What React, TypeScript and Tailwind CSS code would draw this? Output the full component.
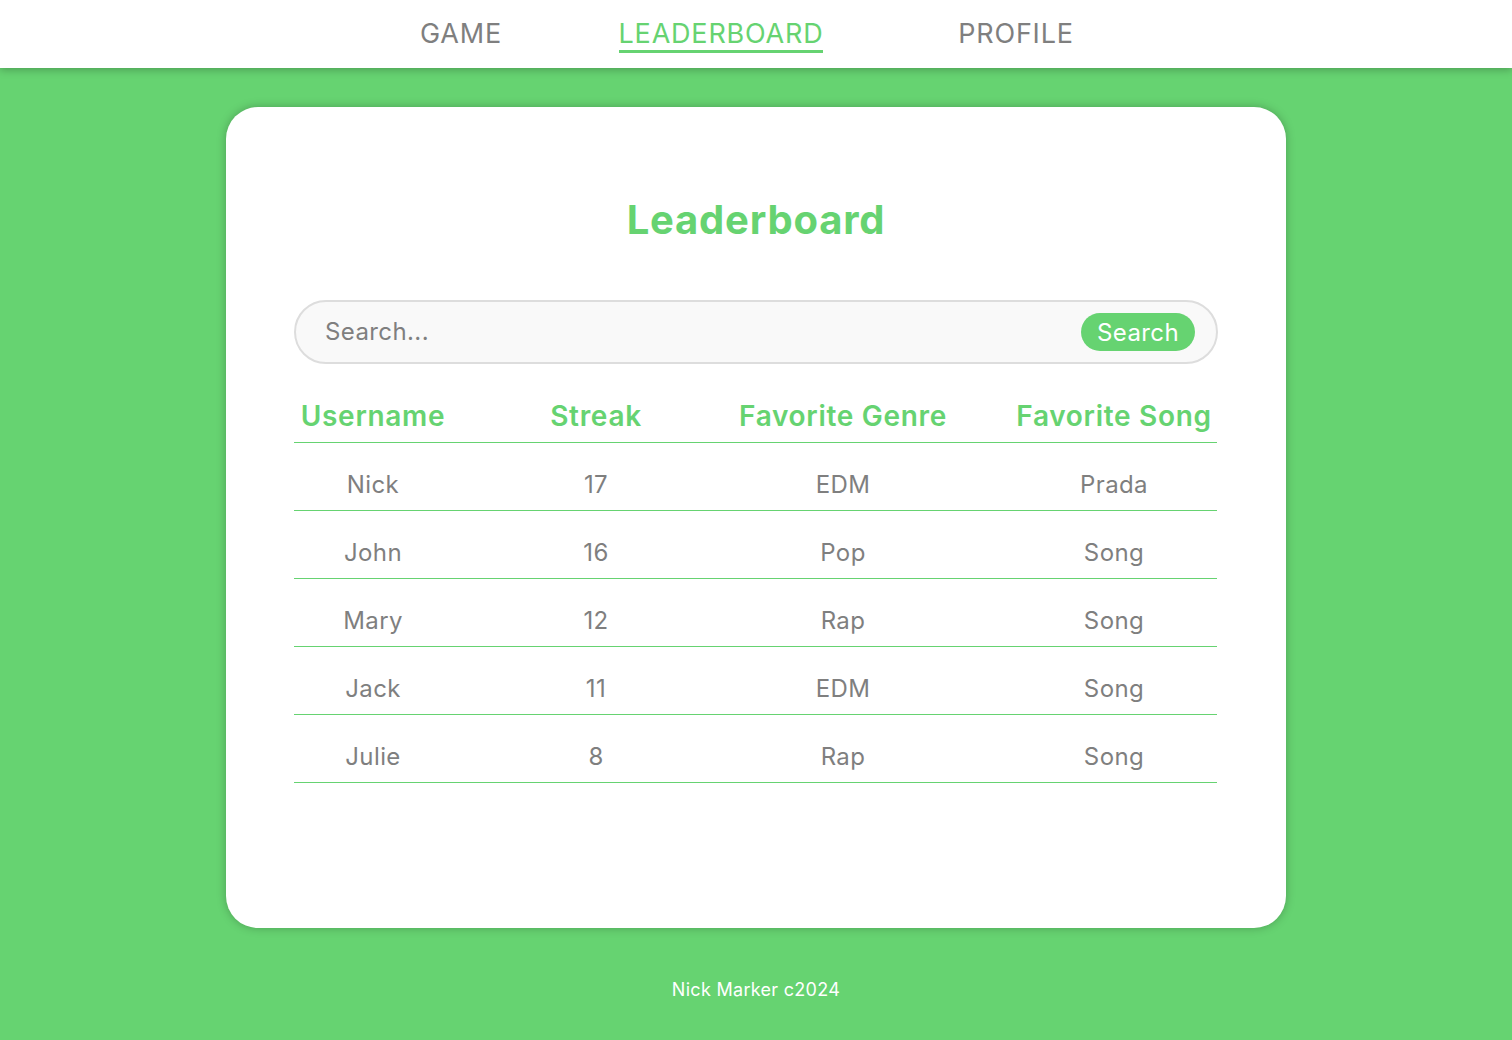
const rows = [
  { name: "Nick", streak: 17, genre: "EDM", song: "Prada" },
  { name: "John", streak: 16, genre: "Pop", song: "Song" },
  { name: "Mary", streak: 12, genre: "Rap", song: "Song" },
  { name: "Jack", streak: 11, genre: "EDM", song: "Song" },
  { name: "Julie", streak: 8, genre: "Rap", song: "Song" },
];

const font = { fontFamily: "Inter, 'Open Sans', sans-serif" };

const th =
  "flex justify-center whitespace-nowrap border-b border-[#66d371] pb-[9px] text-[28px] font-semibold leading-[34px] tracking-[0.7px] text-[#66d371]";
const td =
  "flex justify-center whitespace-nowrap border-b border-[#66d371] pb-[10px] pt-[27px] text-[24px] leading-[30px] tracking-[0.4px] text-[#7f7f7f]";

export default function App() {
  return (
    <div className="min-h-screen bg-[#66d371]" style={font}>
      <header className="relative z-10 flex h-[68px] items-center justify-center bg-white shadow-[0_2px_8px_rgba(0,0,0,0.25)]">
        <nav className="flex">
          <a className="w-[240px] text-center text-[27px] leading-[32px] tracking-[0.8px] text-[#7f7f7f]">
            GAME
          </a>
          <a className="w-[280px] text-center text-[27px] leading-[32px] tracking-[0.8px] text-[#66d371]">
            <span className="border-b-[3px] border-[#66d371] pb-0">LEADERBOARD</span>
          </a>
          <a className="w-[310px] text-center text-[27px] leading-[32px] tracking-[0.8px] text-[#7f7f7f]">
            PROFILE
          </a>
        </nav>
      </header>

      <main className="mx-auto mt-[39px] h-[821px] w-[1060px] rounded-[32px] bg-white px-[68px] pt-[89px] shadow-[0_0_10px_rgba(0,0,0,0.25)]">
        <h1 className="text-center text-[40px] font-bold leading-[48px] tracking-[0.8px] text-[#66d371]">
          Leaderboard
        </h1>

        <div className="mt-[56px] flex h-[64px] items-center rounded-full border-2 border-[#dddddd] bg-[#f9f9f9] pl-[29px] pr-[21px]">
          <input
            className="flex-1 bg-transparent text-[24px] leading-[30px] tracking-[0.4px] text-[#7f7f7f] outline-none placeholder:text-[#7f7f7f]"
            placeholder="Search..."
          />
          <button className="h-[38px] rounded-full bg-[#66d371] px-[16px] text-[24px] leading-[40px] tracking-[0.4px] text-white">
            Search
          </button>
        </div>

        <div className="mt-[35px] grid grid-cols-[158px_288px_206px_271px]">
          <div className={th}>Username</div>
          <div className={th}>Streak</div>
          <div className={th}>Favorite Genre</div>
          <div className={`${th} pl-[65px]`}>Favorite Song</div>

          {rows.map((r) => (
            <div key={r.name} className="contents">
              <div className={td}>{r.name}</div>
              <div className={td}>{r.streak}</div>
              <div className={td}>{r.genre}</div>
              <div className={`${td} pl-[65px]`}>{r.song}</div>
            </div>
          ))}
        </div>
      </main>

      <footer className="mt-[50px] pb-[38px] text-center text-[18px] leading-[24px] tracking-[0.3px] text-white">
        Nick Marker c2024
      </footer>
    </div>
  );
}
